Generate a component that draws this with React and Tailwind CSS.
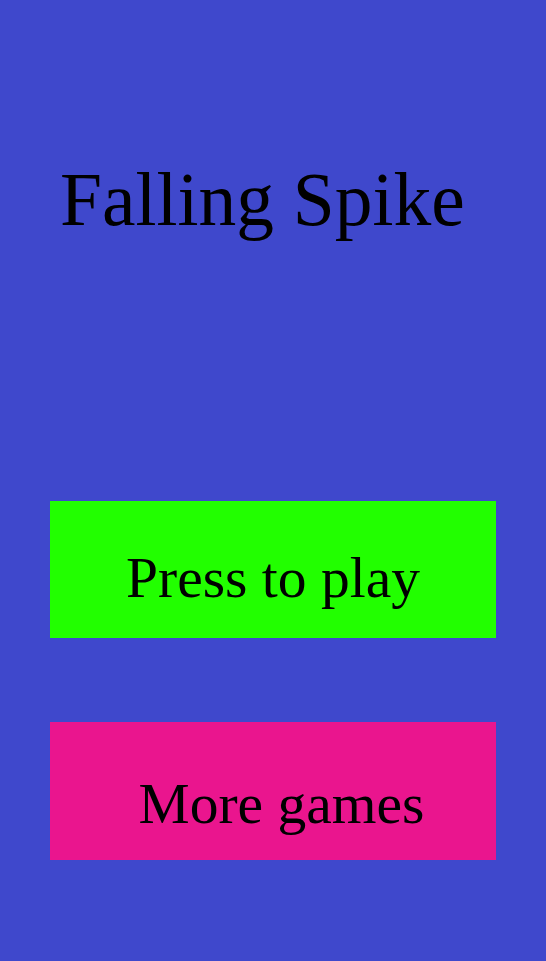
import React from 'react';

const App = () => {
    return (
        <div className="w-full min-h-[961px] bg-[#3f48cc] flex flex-col font-['Liberation_Serif',serif] text-black">
            <h1 className="mt-[162px] pl-[60px] text-[75.5px] leading-none font-normal whitespace-nowrap">Falling Spike</h1>
            <button
                type="button"
                className="mt-[263.5px] ml-[50px] w-[446px] h-[137px] bg-[#22ff00] flex justify-center items-start pt-[48px] text-[57.5px] leading-none"
            >
                Press to play
            </button>
            <button
                type="button"
                className="mt-[84px] ml-[50px] w-[446px] h-[138px] bg-[#ea158e] flex justify-center items-start pt-[53px] pl-[17px] text-[57.5px] leading-none"
            >
                More games
            </button>
        </div>
    );
};

export default App;
